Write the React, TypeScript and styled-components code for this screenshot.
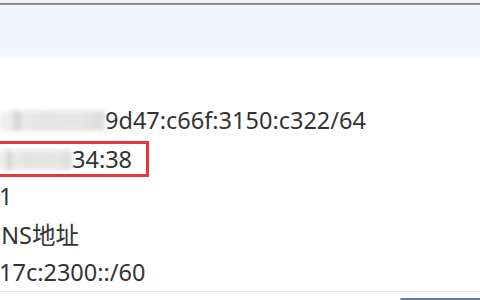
import React from "react";
import styled, { createGlobalStyle } from "styled-components";

const Global = createGlobalStyle`
  html, body { margin: 0; padding: 0; background: #ffffff; }
  body { width: 480px; height: 300px; overflow: hidden; }
`;

const Window = styled.div`
  width: 480px;
  height: 300px;
  display: flex;
  flex-direction: column;
  overflow: hidden;
  background: #ffffff;
  font-family: "Noto Sans", "Noto Sans CJK SC", sans-serif;
`;

const TopStrip = styled.div`
  height: 3px;
  background: #f1f1f1;
`;

const TopRule = styled.div`
  height: 2px;
  background: linear-gradient(#7d7d7d, #9a9a9a);
`;

const Header = styled.div`
  height: 58px;
  background: linear-gradient(#f1f5fe 0%, #f2f6ff 92%, #ffffff 100%);
`;

const Body = styled.div`
  flex: 1;
  display: flex;
  flex-direction: column;
  padding-top: 41px;
`;

const Row = styled.div<{ $indent: number }>`
  display: flex;
  align-items: center;
  height: 38px;
  margin-left: ${(p) => p.$indent}px;
  font-size: 23.5px;
  color: #333333;
  white-space: nowrap;
`;

const HighlightRow = styled(Row)`
  width: fit-content;
  margin-top: 2px;
  height: 30px;
  border: 3px solid #e23a40;
  padding-right: 14px;
`;

const Smudge = styled.span<{ $w: number }>`
  display: inline-block;
  flex: none;
  width: ${(p) => p.$w}px;
  height: 20px;
  margin-top: 2px;
  background:
    linear-gradient(90deg, transparent 0 12%, rgba(150,150,150,0.3) 12% 20%, transparent 20% 100%),
    linear-gradient(90deg, #ececec 0%, #dedede 40%, #e2e2e2 75%, #d4d4d4 100%);
  filter: blur(2px);
  opacity: 0.8;
`;

const Footer = styled.div`
  border-top: 1px solid #e2e2e2;
  height: 8px;
  display: flex;
  justify-content: flex-end;
  align-items: flex-end;
`;

const ButtonTop = styled.div`
  width: 80px;
  height: 2px;
  background: #5f7fa8;
  border-radius: 2px 0 0 0;
`;

export default function App() {
  return (
    <>
      <Global />
      <Window>
        <TopStrip />
        <TopRule />
        <Header />
        <Body>
          <Row $indent={0}>
            <Smudge $w={105} />
            9d47:c66f:3150:c322/64
          </Row>
          <HighlightRow $indent={-6}>
            <Smudge $w={75} />
            34:38
          </HighlightRow>
          <Row $indent={-1}>1</Row>
          <Row $indent={-16}>DNS地址</Row>
          <Row $indent={-1}>17c:2300::/60</Row>
        </Body>
        <Footer>
          <ButtonTop />
        </Footer>
      </Window>
    </>
  );
}
